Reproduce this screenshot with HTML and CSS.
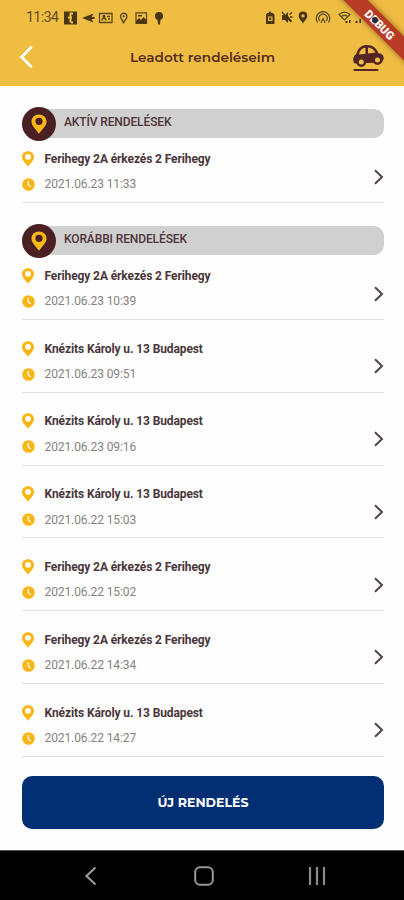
FILE: index.html
```html
<!DOCTYPE html>
<html lang="hu">
<head>
<meta charset="utf-8">
<title>Leadott rendeléseim</title>
<link rel="stylesheet" href="styles.css">
</head>
<body>
<svg class="defs" width="0" height="0">
  <symbol id="pin" viewBox="0 0 12 16"><path fill-rule="evenodd" d="M6 .3C2.600.3 0 2.700 0 5.900 0 9.800 4.200 12.600 6 15.800 7.800 12.600 12 9.800 12 5.900 12 2.700 9.400.3 6 .3ZM6 2.900a2.900 2.900 0 1 1 0 5.800 2.900 2.900 0 0 1 0-5.800Z"/></symbol>
  <symbol id="clock" viewBox="0 0 13 13"><circle cx="6.500" cy="6.500" r="6.300"/><path d="M6.300 3v3.700l2.200 2.400" fill="none" stroke="#fff" stroke-width="1.300"/></symbol>
  <symbol id="next" viewBox="0 0 10 16"><path d="M1 1.300 8 8 1 14.700" fill="none" stroke="#55434a" stroke-width="2"/></symbol>
</svg>
<div class="screen">
  <header class="header">
    <div class="status">
      <span class="time">11:34</span>
      <svg class="status-left" width="102" height="16" viewBox="0 0 102 16">
        <path d="M1 1.500h13v13H1Z"/><path d="M10 3.500H7.500v9M5 7.500h4M9 11.500v2" fill="none" stroke="#f0bd43" stroke-width="2"/>
        <path d="m19 8 11.500-4.500-2 3.500h3v2h-3l2 3.500Z"/>
        <path d="M36.500 3.500h12.500v9h-12.500Z M39 10.500c0-3 4-3 4 0 M44 6.500h3M45 9h2" fill="none" stroke="#594619" stroke-width="1.300"/><circle cx="41" cy="6.500" r="1.400"/>
        <path d="M60.500 13.500c-.2-3.500-3-4-3-7a3.200 3.200 0 0 1 6.400 0c0 3-3 3.500-3.400 7Z" fill="none" stroke="#594619" stroke-width="1.400"/><circle cx="60.700" cy="6.300" r="1"/>
        <path d="M73 2.800h10.500v10.500H73Z" fill="none" stroke="#594619" stroke-width="1.200"/><path d="m73 11 3-3 2 2 2.500-3 3 3v3.500H73Z"/><path d="M75 5h4v1.500h-4Z"/>
        <circle cx="96" cy="6" r="4"/><path d="M94.500 9h3l-.5 5.500h-2Z"/>
      </svg>
      <svg class="status-right" width="104" height="18" viewBox="0 0 104 18">
        <path fill-rule="evenodd" d="M2 4h1.500L5 2l1.500 2H8l1.500 2v9H1V6ZM3 7.500V12h4.500V7.500Z"/><path d="M4.200 8.500h2v2.500h-2Z"/>
        <path d="m17 6 3 .2L23 3v4l4 5-1 1-3-3v4l-3-3h-3Z"/><path d="m17 3 9 10M24.500 5.500 27 3.500M25 8h2.500" fill="none" stroke="#493610" stroke-width="1.300"/>
        <path fill-rule="evenodd" d="M38 2.500a4.300 4.300 0 0 0-4.300 4.200c0 3.600 3.300 5.100 4.300 8.100 1-3 4.300-4.500 4.300-8.100A4.300 4.300 0 0 0 38 2.500Zm0 2.800a1.600 1.600 0 1 1 0 3.200 1.600 1.600 0 0 1 0-3.200Z"/>
        <path d="M52.500 13.500a6.800 6.800 0 1 1 11 0M54.700 12a4.200 4.200 0 1 1 6.600 0M55.800 14l2.200-4.500 2.200 4.500" fill="none" stroke="#594619" stroke-width="1.200"/>
        <path d="M74 5.500c3.500-3 7.500-3 11 0l-5.500 5.500ZM76.500 7.500c2-1.500 4-1.500 6 0" fill="none" stroke="#594619" stroke-width="1.200"/><path d="M80.500 12h2v2h-2ZM84 11h1.500v3H84ZM90.500 12h2v2h-2ZM94.500 10h1.500v4h-1.500Z"/>
      </svg>
    </div>
    <div class="appbar">
      <svg class="back" width="14" height="22" viewBox="0 0 14 22"><path d="M12 1.500 2.500 11 12 20.500" fill="none" stroke="#fff" stroke-width="2.600" stroke-linecap="round"/></svg>
      <h1 class="title">Leadott rendeléseim</h1>
      <svg class="car" width="33" height="28" viewBox="0 0 33 28">
        <path fill-rule="evenodd" d="M2.500 19.500C.6 16.500.6 12.500 4 10.500 5.500 5.500 8 1.500 14 1c6.500-.4 10.500 3 12.500 8.300 4.500.7 6 3.200 5 6l-1.700 3.200ZM7 10.500l6.500-.8V3.800C10 4 7.700 6.500 7 10.500Zm9-7v6l7.500-.9C21.500 5.200 19 3.700 16 3.500Z"/>
        <circle cx="9.300" cy="18" r="3.700" fill="#f0bd43" stroke="#542522" stroke-width="2.400"/>
        <circle cx="25.500" cy="16" r="3.700" fill="#f0bd43" stroke="#542522" stroke-width="2.400"/>
        <path d="M2.500 26h23" fill="none" stroke="#542522" stroke-width="2.200" stroke-linecap="round"/>
      </svg>
    </div>
    <div class="ribbon"><span>DEBUG</span></div>
    <div class="camera"></div>
  </header>
  <main class="content">
    <section class="group">
      <div class="group-head"><span class="badge"><svg width="16" height="20"><use href="#pin"/></svg></span><h2 class="group-title">AKTÍV RENDELÉSEK</h2></div>
      <div class="order"><div class="info"><div class="line"><svg class="pin"><use href="#pin"/></svg><span class="place">Ferihegy 2A érkezés 2 Ferihegy</span></div><div class="line"><svg class="clock"><use href="#clock"/></svg><span class="date">2021.06.23 11:33</span></div></div><svg class="next"><use href="#next"/></svg></div>
    </section>
    <section class="group">
      <div class="group-head"><span class="badge"><svg width="16" height="20"><use href="#pin"/></svg></span><h2 class="group-title">KORÁBBI RENDELÉSEK</h2></div>
      <div class="order"><div class="info"><div class="line"><svg class="pin"><use href="#pin"/></svg><span class="place">Ferihegy 2A érkezés 2 Ferihegy</span></div><div class="line"><svg class="clock"><use href="#clock"/></svg><span class="date">2021.06.23 10:39</span></div></div><svg class="next"><use href="#next"/></svg></div>
      <div class="order"><div class="info"><div class="line"><svg class="pin"><use href="#pin"/></svg><span class="place">Knézits Károly u. 13 Budapest</span></div><div class="line"><svg class="clock"><use href="#clock"/></svg><span class="date">2021.06.23 09:51</span></div></div><svg class="next"><use href="#next"/></svg></div>
      <div class="order"><div class="info"><div class="line"><svg class="pin"><use href="#pin"/></svg><span class="place">Knézits Károly u. 13 Budapest</span></div><div class="line"><svg class="clock"><use href="#clock"/></svg><span class="date">2021.06.23 09:16</span></div></div><svg class="next"><use href="#next"/></svg></div>
      <div class="order"><div class="info"><div class="line"><svg class="pin"><use href="#pin"/></svg><span class="place">Knézits Károly u. 13 Budapest</span></div><div class="line"><svg class="clock"><use href="#clock"/></svg><span class="date">2021.06.22 15:03</span></div></div><svg class="next"><use href="#next"/></svg></div>
      <div class="order"><div class="info"><div class="line"><svg class="pin"><use href="#pin"/></svg><span class="place">Ferihegy 2A érkezés 2 Ferihegy</span></div><div class="line"><svg class="clock"><use href="#clock"/></svg><span class="date">2021.06.22 15:02</span></div></div><svg class="next"><use href="#next"/></svg></div>
      <div class="order"><div class="info"><div class="line"><svg class="pin"><use href="#pin"/></svg><span class="place">Ferihegy 2A érkezés 2 Ferihegy</span></div><div class="line"><svg class="clock"><use href="#clock"/></svg><span class="date">2021.06.22 14:34</span></div></div><svg class="next"><use href="#next"/></svg></div>
      <div class="order"><div class="info"><div class="line"><svg class="pin"><use href="#pin"/></svg><span class="place">Knézits Károly u. 13 Budapest</span></div><div class="line"><svg class="clock"><use href="#clock"/></svg><span class="date">2021.06.22 14:27</span></div></div><svg class="next"><use href="#next"/></svg></div>
    </section>
    <button class="new-order">ÚJ RENDELÉS</button>
  </main>
  <nav class="navbar">
    <svg width="14" height="20" viewBox="0 0 14 20"><path d="M11.500 1.500 2.500 10l9 8.500" fill="none" stroke="#999" stroke-width="2.200"/></svg>
    <svg width="20" height="20" viewBox="0 0 20 20"><rect x="1.200" y="1.200" width="17.600" height="17.600" rx="5" fill="none" stroke="#999" stroke-width="2"/></svg>
    <svg width="18" height="20" viewBox="0 0 18 20"><path d="M2 1v18M9 1v18M16 1v18" fill="none" stroke="#8c8c8c" stroke-width="2.200"/></svg>
  </nav>
</div>
</body>
</html>
```
FILE: styles.css
```css
* { box-sizing: border-box; }
body { margin: 0; background: #fefefe; font-family: Roboto, "Liberation Sans", sans-serif; }
h1, h2 { margin: 0; }
svg { display: block; flex: none; }
.defs { position: absolute; }
.screen { width: 404px; height: 900px; display: flex; flex-direction: column; overflow: hidden; }

.header { position: relative; height: 86px; background: #f0bd43; overflow: hidden; flex: none; }
.status { display: flex; align-items: center; height: 35px; padding: 0 36px 0 26px; fill: #493610; }
.time { width: 37px; font-size: 14.500px; letter-spacing: -0.800px; color: #655020; white-space: nowrap; }
.status-right { margin-left: auto; margin-right: -1px; }
.appbar { display: flex; align-items: center; height: 44px; padding: 0 19px; }
.title { flex: 1; margin-left: 20px; text-align: center; font: 600 13.600px/20px Montserrat, "Open Sans", sans-serif; color: #542c20; white-space: nowrap; }
.car { fill: #542522; margin-top: 2px; }
.ribbon { position: absolute; right: -44px; top: 16px; width: 136px; height: 17px; background: #b83b25; box-shadow: 0 0 6px rgba(80, 40, 0, .6); transform: rotate(45deg); display: flex; align-items: center; justify-content: center; color: #fff; font-size: 11.500px; font-weight: 900; }
.camera { position: absolute; left: 372px; top: 17px; width: 6px; height: 6px; border-radius: 50%; background: #262833; }

.content { flex: 1; padding: 21px 20px 0 22px; }
.group + .group { margin-top: 21px; }
.group-head { display: flex; align-items: center; height: 34px; }
.badge { z-index: 1; width: 34px; height: 34px; margin-right: -34px; border-radius: 50%; background: #4b2023; fill: #fbb817; display: flex; align-items: center; justify-content: center; }
.group-title { flex: 1; height: 29px; margin-bottom: 1px; padding-left: 42px; border-radius: 14px 10px 10px 14px; background: #d0d0d0; font-size: 12px; line-height: 26px; letter-spacing: -0.120px; font-weight: 500; color: #4d3539; white-space: nowrap; }
.order { display: flex; align-items: flex-end; justify-content: space-between; height: 72.800px; padding-bottom: 5px; border-bottom: 1px solid #e2e2e2; }
.group-head + .order { height: 62px; }
.info { display: flex; flex-direction: column; }
.line { display: flex; align-items: center; height: 25.500px; }
.pin { width: 12px; height: 16px; margin-right: 10.500px; fill: #fbb515; }
.clock { width: 13px; height: 13px; margin-right: 10px; margin-left: -0.500px; fill: #fbb515; }
.place { font-size: 12px; font-weight: 700; letter-spacing: -0.110px; color: #49363b; white-space: nowrap; }
.date { font-size: 12px; letter-spacing: -0.100px; color: #85817f; white-space: nowrap; }
.next { width: 10px; height: 16px; margin-bottom: 12.500px; }
.new-order { display: block; width: 362px; height: 53px; margin-top: 19px; padding: 0; border: 0; border-radius: 10px; background: #022f73; color: #fff; font: 700 12.600px/53px Montserrat, "Open Sans", sans-serif; }

.navbar { display: flex; justify-content: space-between; align-items: center; height: 50px; padding: 0 78px 0 84px; background: #000; border-top: 1px solid #555; flex: none; }
.navbar svg:nth-child(2) { margin-left: 2px; }
```
